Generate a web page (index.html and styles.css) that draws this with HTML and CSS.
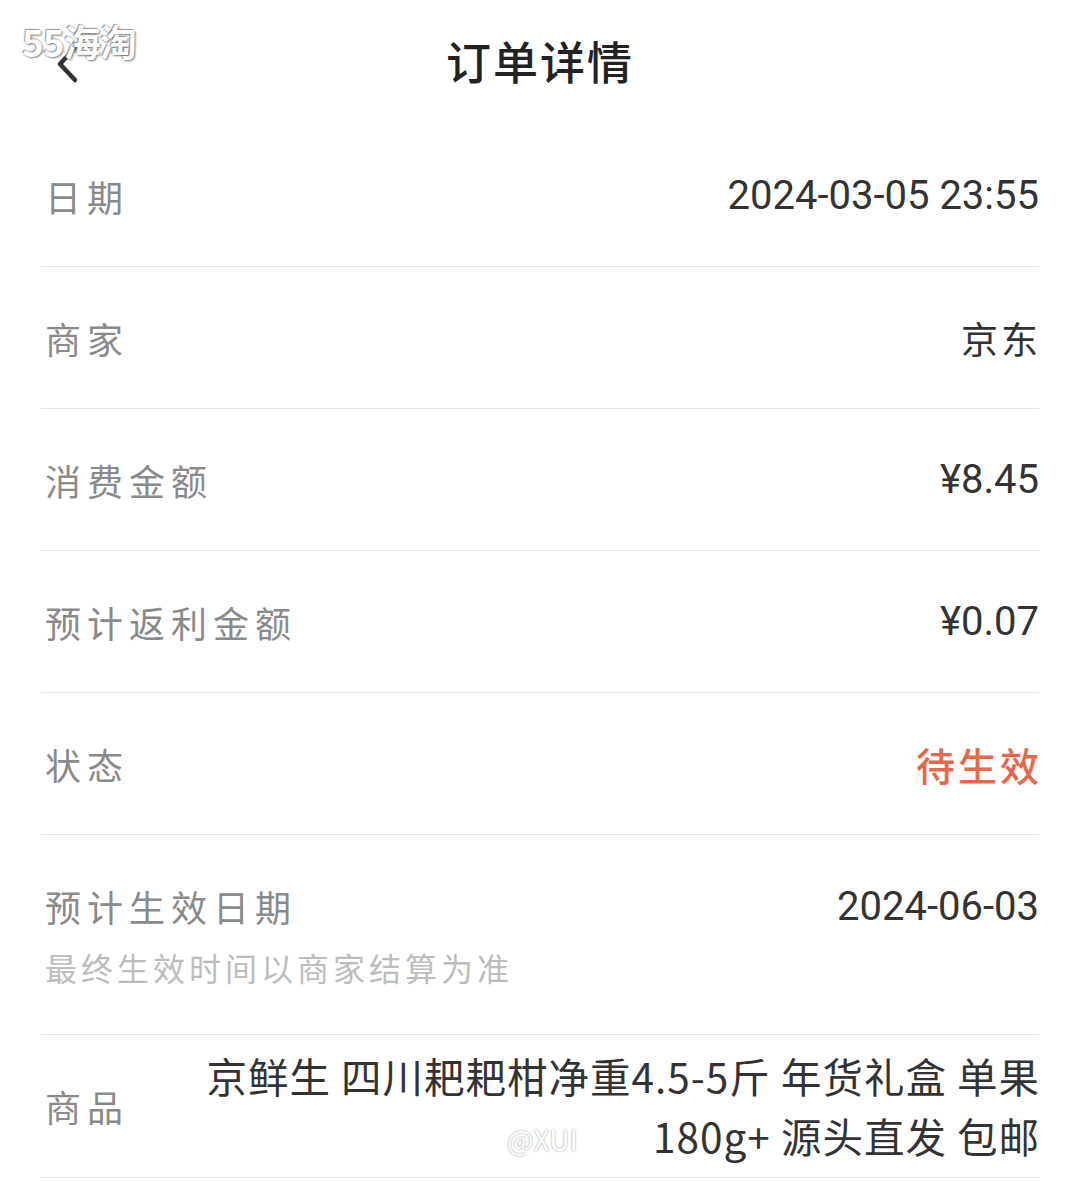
FILE: index.html
```html
<!DOCTYPE html>
<html lang="zh-CN">
<head>
  <meta charset="UTF-8">
  <meta name="viewport" content="width=device-width, initial-scale=1.0">
  <title>订单详情</title>
  <link rel="stylesheet" href="styles.css">
</head>
<body>
  <div class="watermark">55海淘</div>

  <header class="topbar">
    <span class="back">
      <svg width="24" height="40" viewBox="0 0 24 40">
        <path d="M20 4 L5 20 L20 36" fill="none" stroke="#333" stroke-width="4.5" stroke-linecap="round" stroke-linejoin="round"/>
      </svg>
    </span>
    <h1>订单详情</h1>
  </header>

  <div class="list">
    <div class="row">
      <span class="label">日期</span>
      <span class="value num">2024-03-05 23:55</span>
    </div>
    <div class="row">
      <span class="label">商家</span>
      <span class="value">京东</span>
    </div>
    <div class="row">
      <span class="label">消费金额</span>
      <span class="value num">¥8.45</span>
    </div>
    <div class="row">
      <span class="label">预计返利金额</span>
      <span class="value num">¥0.07</span>
    </div>
    <div class="row">
      <span class="label">状态</span>
      <span class="value status">待生效</span>
    </div>
    <div class="row row-tall">
      <div class="label-group">
        <span class="label">预计生效日期</span>
        <span class="hint">最终生效时间以商家结算为准</span>
      </div>
      <span class="value num">2024-06-03</span>
    </div>
    <div class="row row-goods">
      <span class="label">商品</span>
      <span class="value goods">京鲜生 四川耙耙柑净重4.5-5斤 年货礼盒 单果<br>180g+ 源头直发 包邮</span>
      <span class="author">@XUI</span>
    </div>
  </div>
</body>
</html>
```

FILE: styles.css
```css
body {
  margin: 0;
  background: #fff;
  font-family: "Noto Sans CJK SC", "Noto Sans", sans-serif;
  color: #333;
}
.watermark {
  position: absolute;
  left: 22px;
  top: 14px;
  font-size: 37px;
  font-weight: bold;
  color: #fff;
  letter-spacing: -1px;
  text-shadow: 1px 1px 2px #777, -1px -1px 1px #999;
  z-index: 2;
}
.topbar {
  height: 125px;
  display: flex;
  align-items: center;
  justify-content: center;
  position: relative;
}
.back {
  position: absolute;
  left: 55px;
  top: 44px;
}
.topbar h1 {
  margin: 0 0 4px;
  font-size: 45px;
  font-weight: 500;
  letter-spacing: 2px;
  color: #222;
}
.list {
  margin: 0 41px;
}
.row {
  display: flex;
  align-items: center;
  justify-content: space-between;
  height: 141px;
  border-bottom: 1px solid #e3e3e3;
  position: relative;
}
.label {
  font-size: 36px;
  color: #8a8a8a;
  letter-spacing: 6px;
  padding-left: 4px;
}
.value {
  font-size: 37px;
  color: #333;
  letter-spacing: 3px;
  margin-right: -2px;
}
.num {
  font-family: Roboto, "Noto Sans", sans-serif;
  font-size: 40px;
  letter-spacing: 0;
  margin-right: 0;
}
.status {
  color: #e8674a;
  font-size: 39px;
  font-weight: 500;
  letter-spacing: 3px;
  margin-right: -3px;
}
.row-tall {
  height: 199px;
  align-items: flex-start;
}
.row-tall .value {
  margin-top: 48px;
}
.label-group {
  display: flex;
  flex-direction: column;
  margin-top: 45px;
}
.hint {
  font-size: 32px;
  color: #bdbdbd;
  letter-spacing: 4px;
  padding-left: 4px;
  margin-top: 12px;
}
.row-goods {
  height: 142px;
}
.goods {
  text-align: right;
  line-height: 60px;
  letter-spacing: 1px;
  margin-right: -1px;
  font-size: 40.5px;
}
.author {
  position: absolute;
  left: 466px;
  top: 84px;
  font-size: 28px;
  color: #fff;
  text-shadow: 0 0 2px #888;
}
```
